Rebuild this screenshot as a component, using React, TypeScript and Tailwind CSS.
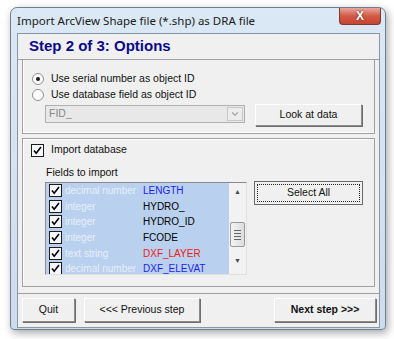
import { ChevronDown } from "lucide-react";

const rows = [
  { type: "decimal number", name: "LENGTH", color: "text-[#1f1fe8]" },
  { type: "integer", name: "HYDRO_", color: "text-black" },
  { type: "integer", name: "HYDRO_ID", color: "text-black" },
  { type: "integer", name: "FCODE", color: "text-black" },
  { type: "text string", name: "DXF_LAYER", color: "text-[#f01818]" },
  { type: "decimal number", name: "DXF_ELEVAT", color: "text-[#1f1fe8]" },
];

const Check = () => (
  <svg viewBox="0 0 13 13" className="h-[13px] w-[13px] shrink-0">
    <rect x="0.5" y="0.5" width="12" height="12" fill="#f4f7fb" stroke="#1c1c1c" />
    <path d="M3 6.5 L5.2 9.2 L10 3" fill="none" stroke="#000" strokeWidth="1.6" />
  </svg>
);

const Radio = ({ on }: { on?: boolean }) => (
  <svg viewBox="0 0 12 12" className="h-[12px] w-[12px] shrink-0">
    <circle cx="6" cy="6" r="5.5" fill="#fff" stroke="#8e8f8f" />
    {on && <circle cx="6" cy="6" r="2" fill="#1a1a1a" />}
  </svg>
);

const Btn = ({ label, className = "", bold = false }: { label: string; className?: string; bold?: boolean }) => (
  <div
    className={`flex items-center justify-center border border-t-white border-l-white border-r-[#8c8c8c] border-b-[#8c8c8c] bg-[#f0f0f0] shadow-[1px_1px_0_#6e6e6e] text-[10.5px] text-[#111] whitespace-nowrap ${bold ? "font-bold" : ""} ${className}`}
  >
    {label}
  </div>
);

export default function App() {
  return (
    <div className="h-[339px] w-[394px] bg-white font-['Liberation_Sans',Arial,sans-serif] pt-[7px] pl-[10px]">
      <div className="relative h-[323px] w-[376px] rounded-t-[7px] rounded-b-[4px] border border-[#6f7f92] bg-gradient-to-b from-[#dbe8f5] to-[#cddcee] shadow-[2px_3px_8px_rgba(0,0,0,0.35)]">
        {/* title bar */}
        <div className="flex h-[25px] items-center pl-[6px] text-[11.5px] text-[#1a1a1a] font-['Noto_Sans','Liberation_Sans',sans-serif]">
          Import ArcView Shape file (*.shp) as DRA file
        </div>
        <div className="absolute right-[4px] top-0 flex h-[17px] w-[42px] items-center justify-center rounded-b-[4px] border border-t-0 border-[#7a3a30] bg-gradient-to-b from-[#e8a79c] via-[#cf5a47] to-[#c8442f]">
          <span className="text-[12px] font-bold leading-none text-white [text-shadow:0_0_2px_#4a1a14]">X</span>
        </div>

        {/* client area */}
        <div className="ml-[6px] flex h-[295px] w-[363px] flex-col border border-[#8a96a4] bg-[#f0f0f0]">
          <div className="flex h-[25px] items-center pl-[11px] text-[15px] font-bold text-[#0a0a88]">
            Step 2 of 3: Options
          </div>
          <div className="h-px bg-[#a0a0a0]" />
          <div className="flex flex-col gap-[4px] px-[4px] text-[10.5px] text-[#111]">
            {/* group 1 */}
            <div className="flex h-[74px] flex-col border border-t-0 border-[#a0a0a0] shadow-[inset_1px_0_0_#fff,inset_0_-1px_0_#fff] pl-[9px]">
              <div className="mt-[12px] flex h-[14px] items-center gap-[7px]">
                <Radio on />
                <span>Use serial number as object ID</span>
              </div>
              <div className="mt-[2px] flex h-[14px] items-center gap-[7px]">
                <Radio />
                <span>Use database field as object ID</span>
              </div>
              <div className="mt-[2px] flex items-start gap-[10px] pl-[13px]">
                <div className="mt-[1px] flex h-[18px] w-[200px] items-center justify-between border border-[#b0b0b0] bg-[#e8e8e8] pl-[3px] text-[#8a8a8a]">
                  <span>FID_</span>
                  <div className="mr-px flex h-[14px] w-[16px] items-center justify-center border border-[#c8c8c8] bg-[#ececec]">
                    <ChevronDown className="h-[10px] w-[10px] text-[#a8a8a8]" strokeWidth={3} />
                  </div>
                </div>
                <Btn label="Look at data" className="h-[22px] w-[107px]" />
              </div>
            </div>

            {/* group 2 */}
            <div className="flex h-[149px] flex-col border border-[#a0a0a0] shadow-[inset_1px_1px_0_#fff] pl-[8px]">
              <div className="mt-[4px] flex h-[14px] items-center gap-[7px]">
                <Check />
                <span>Import database</span>
              </div>
              <div className="mt-[9px] h-[12px] pl-[15px] leading-[12px]">Fields to import</div>
              <div className="mt-[4px] flex items-start gap-[7px] pl-[14px]">
                <div className="flex h-[93px] w-[202px] overflow-hidden border border-t-[#8a8a8a] border-l-[#8a8a8a] border-r-[#e0e0e0] border-b-[#e0e0e0] bg-[#b9d1ee]">
                  <div className="flex flex-1 flex-col pl-[3px]">
                    {rows.map((r) => (
                      <div key={r.name} className="flex h-[15.6px] shrink-0 items-center whitespace-nowrap text-[10px]">
                        <Check />
                        <span className="ml-[3px] w-[78px] shrink-0 text-[#e6eef9]">{r.type}</span>
                        <span className={r.color}>{r.name}</span>
                      </div>
                    ))}
                  </div>
                  <div className="flex w-[17px] shrink-0 flex-col items-center bg-[#f2f2f2]">
                    <span className="mt-[5px] text-[7px] leading-none text-[#4a4a4a]">▲</span>
                    <div className="mt-[27px] flex h-[25px] w-[15px] flex-col items-center justify-center gap-[2px] rounded-[2px] border border-[#9a9a9a] bg-gradient-to-r from-[#f4f4f4] to-[#dcdcdc]">
                      <div className="h-px w-[7px] bg-[#666]" />
                      <div className="h-px w-[7px] bg-[#666]" />
                      <div className="h-px w-[7px] bg-[#666]" />
                      <div className="h-px w-[7px] bg-[#666]" />
                    </div>
                    <span className="mt-[10px] text-[7px] leading-none text-[#4a4a4a]">▼</span>
                  </div>
                </div>
                <div className="-mt-px border border-[#6a6a6a] bg-[#f0f0f0] p-[2px]">
                  <div className="flex h-[18px] w-[103px] items-center justify-center border border-dotted border-[#222] text-[10.5px]">
                    Select All
                  </div>
                </div>
              </div>
            </div>
          </div>
          <div className="mt-[6px] h-px bg-[#a0a0a0]" />
          <div className="flex items-center pl-[4px] pr-[3px] pt-[4px]">
            <Btn label="Quit" className="h-[24px] w-[53px]" />
            <Btn label="<<< Previous step" className="ml-[9px] h-[24px] w-[116px]" />
            <Btn label="Next step >>>" className="ml-auto h-[24px] w-[102px]" bold />
          </div>
        </div>
      </div>
    </div>
  );
}
